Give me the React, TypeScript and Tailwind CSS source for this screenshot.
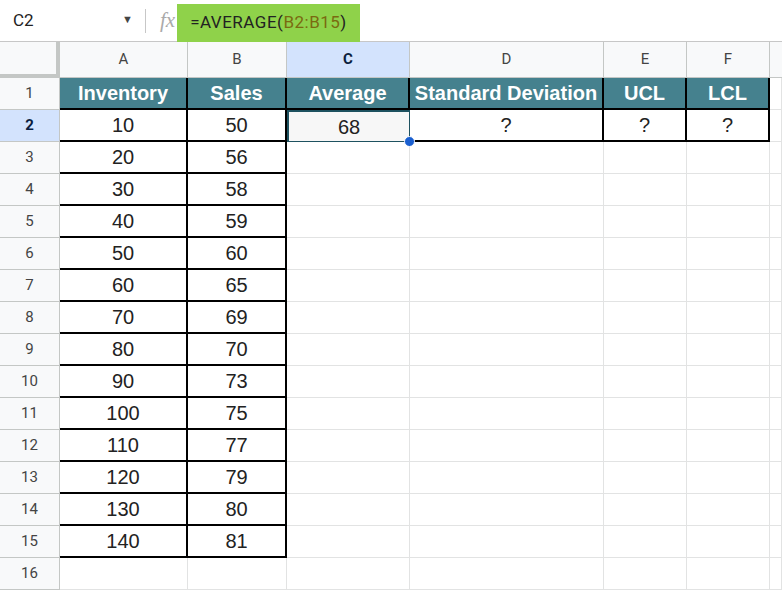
import React from 'react'

const cols = ['A', 'B', 'C', 'D', 'E', 'F']
const grid = 'grid grid-cols-[60px_128px_99px_123px_194px_83px_83px_12px]'
const arial = 'font-[family-name:Liberation_Sans,Arial,sans-serif]'
const data: [number, number][] = [
  [10, 50], [20, 56], [30, 58], [40, 59], [50, 60], [60, 65], [70, 69],
  [80, 70], [90, 73], [100, 75], [110, 77], [120, 79], [130, 80], [140, 81],
]

function Cell({ children, cls = '' }: { children?: React.ReactNode; cls?: string }) {
  return <div className={`h-[32px] flex items-center justify-center border-r border-b ${cls}`}>{children}</div>
}

export default function App() {
  const heads = ['Inventory', 'Sales', 'Average', 'Standard Deviation', 'UCL', 'LCL']
  const val = `border-black border-r-2 border-b-2 text-[20px] ${arial}`
  return (
    <div className="w-[782px] h-[591px] overflow-hidden bg-white text-[#222] font-[family-name:Roboto,Liberation_Sans,sans-serif]">
      {/* formula bar */}
      <div className="h-[42px] flex items-center border-b border-[#c7c7c7]">
        <div className="w-[145px] pl-[13px] flex items-center justify-between pr-[12px] text-[17px]">
          <span>C2</span>
          <span className="text-[11px] text-[#444]">▼</span>
        </div>
        <div className="w-px h-[24px] bg-[#c7c7c7]" />
        <span className="ml-[14px] text-[#aaa] italic text-[21px] font-[family-name:Liberation_Serif,serif]">fx</span>
        <div className="ml-[2px] h-[38px] self-start mt-[4px] bg-[#8fd24a] px-[13px] flex items-center text-[17px] tracking-[0.5px]">
          =AVERAGE(<span className="text-[#7a6a10]">B2:B15</span>)
        </div>
      </div>
      {/* column headers */}
      <div className={`${grid} h-[36px] text-[15px] text-[#444]`}>
        <div className="bg-[#f8f9fa] border-r-[4px] border-b-[4px] border-[#c4c7c5]" />
        {cols.map(c => (
          <div key={c} className={`flex items-center justify-center border-r border-b border-[#c4c7c5] ${c === 'C' ? 'bg-[#d3e3fd] font-bold text-[#0b1e3f]' : 'bg-[#f8f9fa]'}`}>{c}</div>
        ))}
        <div className="bg-[#f8f9fa] border-b border-[#c4c7c5]" />
      </div>
      {/* row 1 */}
      <div className={grid}>
        <Cell cls="border-[#c4c7c5] bg-[#f8f9fa] text-[15px] text-[#444]">1</Cell>
        {heads.map(h => (
          <Cell key={h} cls={`bg-[#45818e] border-black border-r-2 border-b-2 text-white font-bold text-[20px] ${arial}`}>{h}</Cell>
        ))}
        <Cell cls="border-[#e2e3e3]" />
      </div>
      {data.map(([a, b], i) => {
        const r = i + 2
        return (
          <div key={r} className={grid}>
            <Cell cls={`border-[#c4c7c5] text-[15px] ${r === 2 ? 'bg-[#d3e3fd] font-bold text-[#0b1e3f]' : 'bg-[#f8f9fa] text-[#444]'}`}>{r}</Cell>
            <Cell cls={val}>{a}</Cell>
            <Cell cls={val}>{b}</Cell>
            {r === 2 ? (
              <>
                <Cell cls={`relative border-[#1e5260] border-2 bg-[#f7f7f7] text-[20px] ${arial}`}>
                  68
                  <span className="absolute -right-[6px] -bottom-[6px] w-[11px] h-[11px] rounded-full bg-[#1a5fd0] border border-white" />
                </Cell>
                <Cell cls={val}>?</Cell>
                <Cell cls={val}>?</Cell>
                <Cell cls={val}>?</Cell>
              </>
            ) : (
              ['C', 'D', 'E', 'F'].map(c => <Cell key={c} cls="border-[#e2e3e3]" />)
            )}
            <Cell cls="border-[#e2e3e3]" />
          </div>
        )
      })}
      <div className={grid}>
        <Cell cls="border-[#c4c7c5] bg-[#f8f9fa] text-[15px] text-[#444]">16</Cell>
        {[0, 1, 2, 3, 4, 5, 6].map(k => <Cell key={k} cls="border-[#e2e3e3]" />)}
      </div>
    </div>
  )
}
